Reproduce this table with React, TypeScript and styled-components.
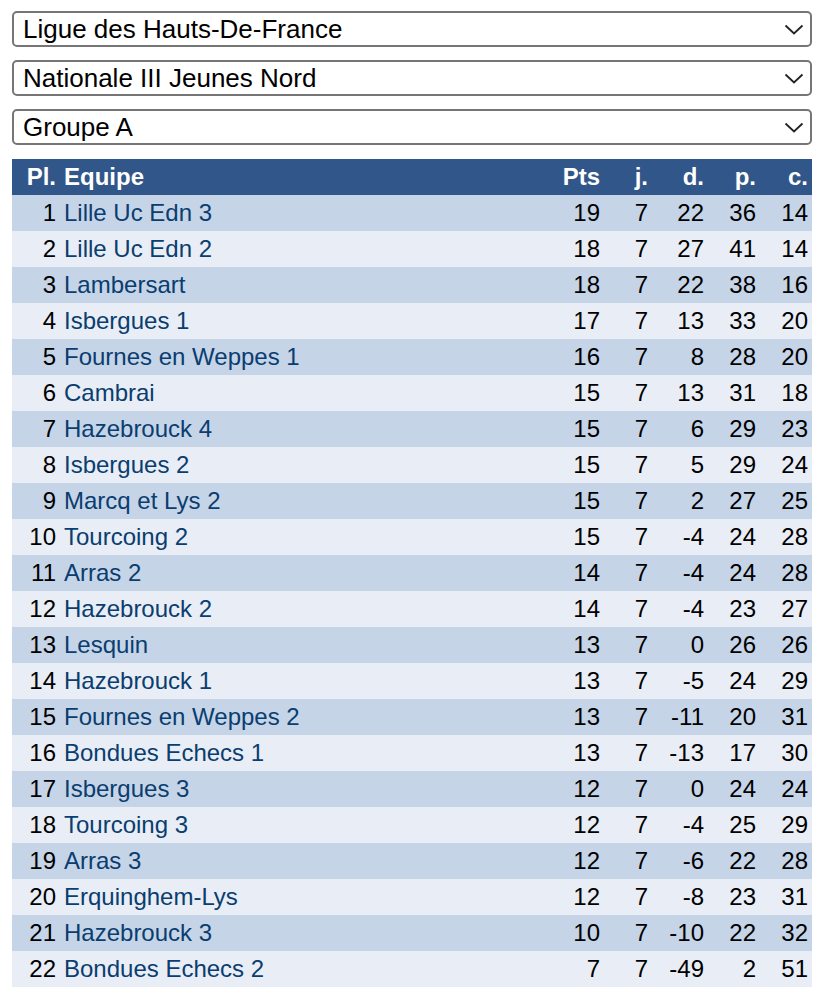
import React from "react";
import styled, { createGlobalStyle } from "styled-components";

const GlobalStyle = createGlobalStyle`
  body {
    margin: 0;
    background: #ffffff;
    font-family: "Liberation Sans", Arial, sans-serif;
  }
`;

const Page = styled.div`
  padding: 11px 14px 12px 12px;
  display: flex;
  flex-direction: column;
  gap: 13px;
`;

const SelectWrap = styled.div`
  position: relative;
  height: 36px;
`;

const Select = styled.select`
  appearance: none;
  -webkit-appearance: none;
  width: 100%;
  height: 36px;
  box-sizing: border-box;
  border: 2px solid #767676;
  border-radius: 5px;
  background: #ffffff;
  font-family: "Liberation Sans", Arial, sans-serif;
  font-size: 26px;
  color: #000;
  padding: 0 40px 0 9px;
  outline: none;
`;

const Chevron = styled.svg`
  position: absolute;
  right: 8px;
  top: 13px;
  pointer-events: none;
`;

const Table = styled.table`
  width: 800px;
  border-collapse: collapse;
  table-layout: fixed;
  font-size: 24px;
  margin-top: 1px;
`;

const HeadCell = styled.th<{ $align?: "left" | "right" }>`
  background: #30568a;
  color: #ffffff;
  font-weight: bold;
  height: 36px;
  padding: 0 4px;
  text-align: ${(p) => p.$align ?? "right"};
`;

const Row = styled.tr<{ $odd: boolean }>`
  background: ${(p) => (p.$odd ? "#c5d4e7" : "#e9edf5")};
`;

const Cell = styled.td<{ $align?: "left" | "right" }>`
  height: 36px;
  padding: 0 4px;
  color: #000;
  text-align: ${(p) => p.$align ?? "right"};
  white-space: nowrap;
`;

const TeamLink = styled.a`
  color: #0a3d70;
  text-decoration: none;
`;

const selects = [
  "Ligue des Hauts-De-France",
  "Nationale III Jeunes Nord",
  "Groupe A",
];

const rows: [string, number, number, number, number, number][] = [
  ["Lille Uc Edn 3", 19, 7, 22, 36, 14],
  ["Lille Uc Edn 2", 18, 7, 27, 41, 14],
  ["Lambersart", 18, 7, 22, 38, 16],
  ["Isbergues 1", 17, 7, 13, 33, 20],
  ["Fournes en Weppes 1", 16, 7, 8, 28, 20],
  ["Cambrai", 15, 7, 13, 31, 18],
  ["Hazebrouck 4", 15, 7, 6, 29, 23],
  ["Isbergues 2", 15, 7, 5, 29, 24],
  ["Marcq et Lys 2", 15, 7, 2, 27, 25],
  ["Tourcoing 2", 15, 7, -4, 24, 28],
  ["Arras 2", 14, 7, -4, 24, 28],
  ["Hazebrouck 2", 14, 7, -4, 23, 27],
  ["Lesquin", 13, 7, 0, 26, 26],
  ["Hazebrouck 1", 13, 7, -5, 24, 29],
  ["Fournes en Weppes 2", 13, 7, -11, 20, 31],
  ["Bondues Echecs 1", 13, 7, -13, 17, 30],
  ["Isbergues 3", 12, 7, 0, 24, 24],
  ["Tourcoing 3", 12, 7, -4, 25, 29],
  ["Arras 3", 12, 7, -6, 22, 28],
  ["Erquinghem-Lys", 12, 7, -8, 23, 31],
  ["Hazebrouck 3", 10, 7, -10, 22, 32],
  ["Bondues Echecs 2", 7, 7, -49, 2, 51],
];

export default function App() {
  return (
    <>
      <GlobalStyle />
      <Page>
        {selects.map((label) => (
          <SelectWrap key={label}>
            <Select defaultValue={label}>
              <option>{label}</option>
            </Select>
            <Chevron width="20" height="11" viewBox="0 0 20 11">
              <path d="M1.5 1.5 L10 9.5 L18.5 1.5" fill="none" stroke="#222" strokeWidth="1.8" />
            </Chevron>
          </SelectWrap>
        ))}
        <Table>
          <colgroup>
            <col style={{ width: 48 }} />
            <col />
            <col style={{ width: 52 }} />
            <col style={{ width: 48 }} />
            <col style={{ width: 56 }} />
            <col style={{ width: 52 }} />
            <col style={{ width: 52 }} />
          </colgroup>
          <thead>
            <tr>
              <HeadCell>Pl.</HeadCell>
              <HeadCell $align="left">Equipe</HeadCell>
              <HeadCell>Pts</HeadCell>
              <HeadCell>j.</HeadCell>
              <HeadCell>d.</HeadCell>
              <HeadCell>p.</HeadCell>
              <HeadCell>c.</HeadCell>
            </tr>
          </thead>
          <tbody>
            {rows.map(([name, pts, j, d, p, c], i) => (
              <Row key={name} $odd={i % 2 === 0}>
                <Cell>{i + 1}</Cell>
                <Cell $align="left">
                  <TeamLink href="#">{name}</TeamLink>
                </Cell>
                <Cell>{pts}</Cell>
                <Cell>{j}</Cell>
                <Cell>{d}</Cell>
                <Cell>{p}</Cell>
                <Cell>{c}</Cell>
              </Row>
            ))}
          </tbody>
        </Table>
      </Page>
    </>
  );
}
